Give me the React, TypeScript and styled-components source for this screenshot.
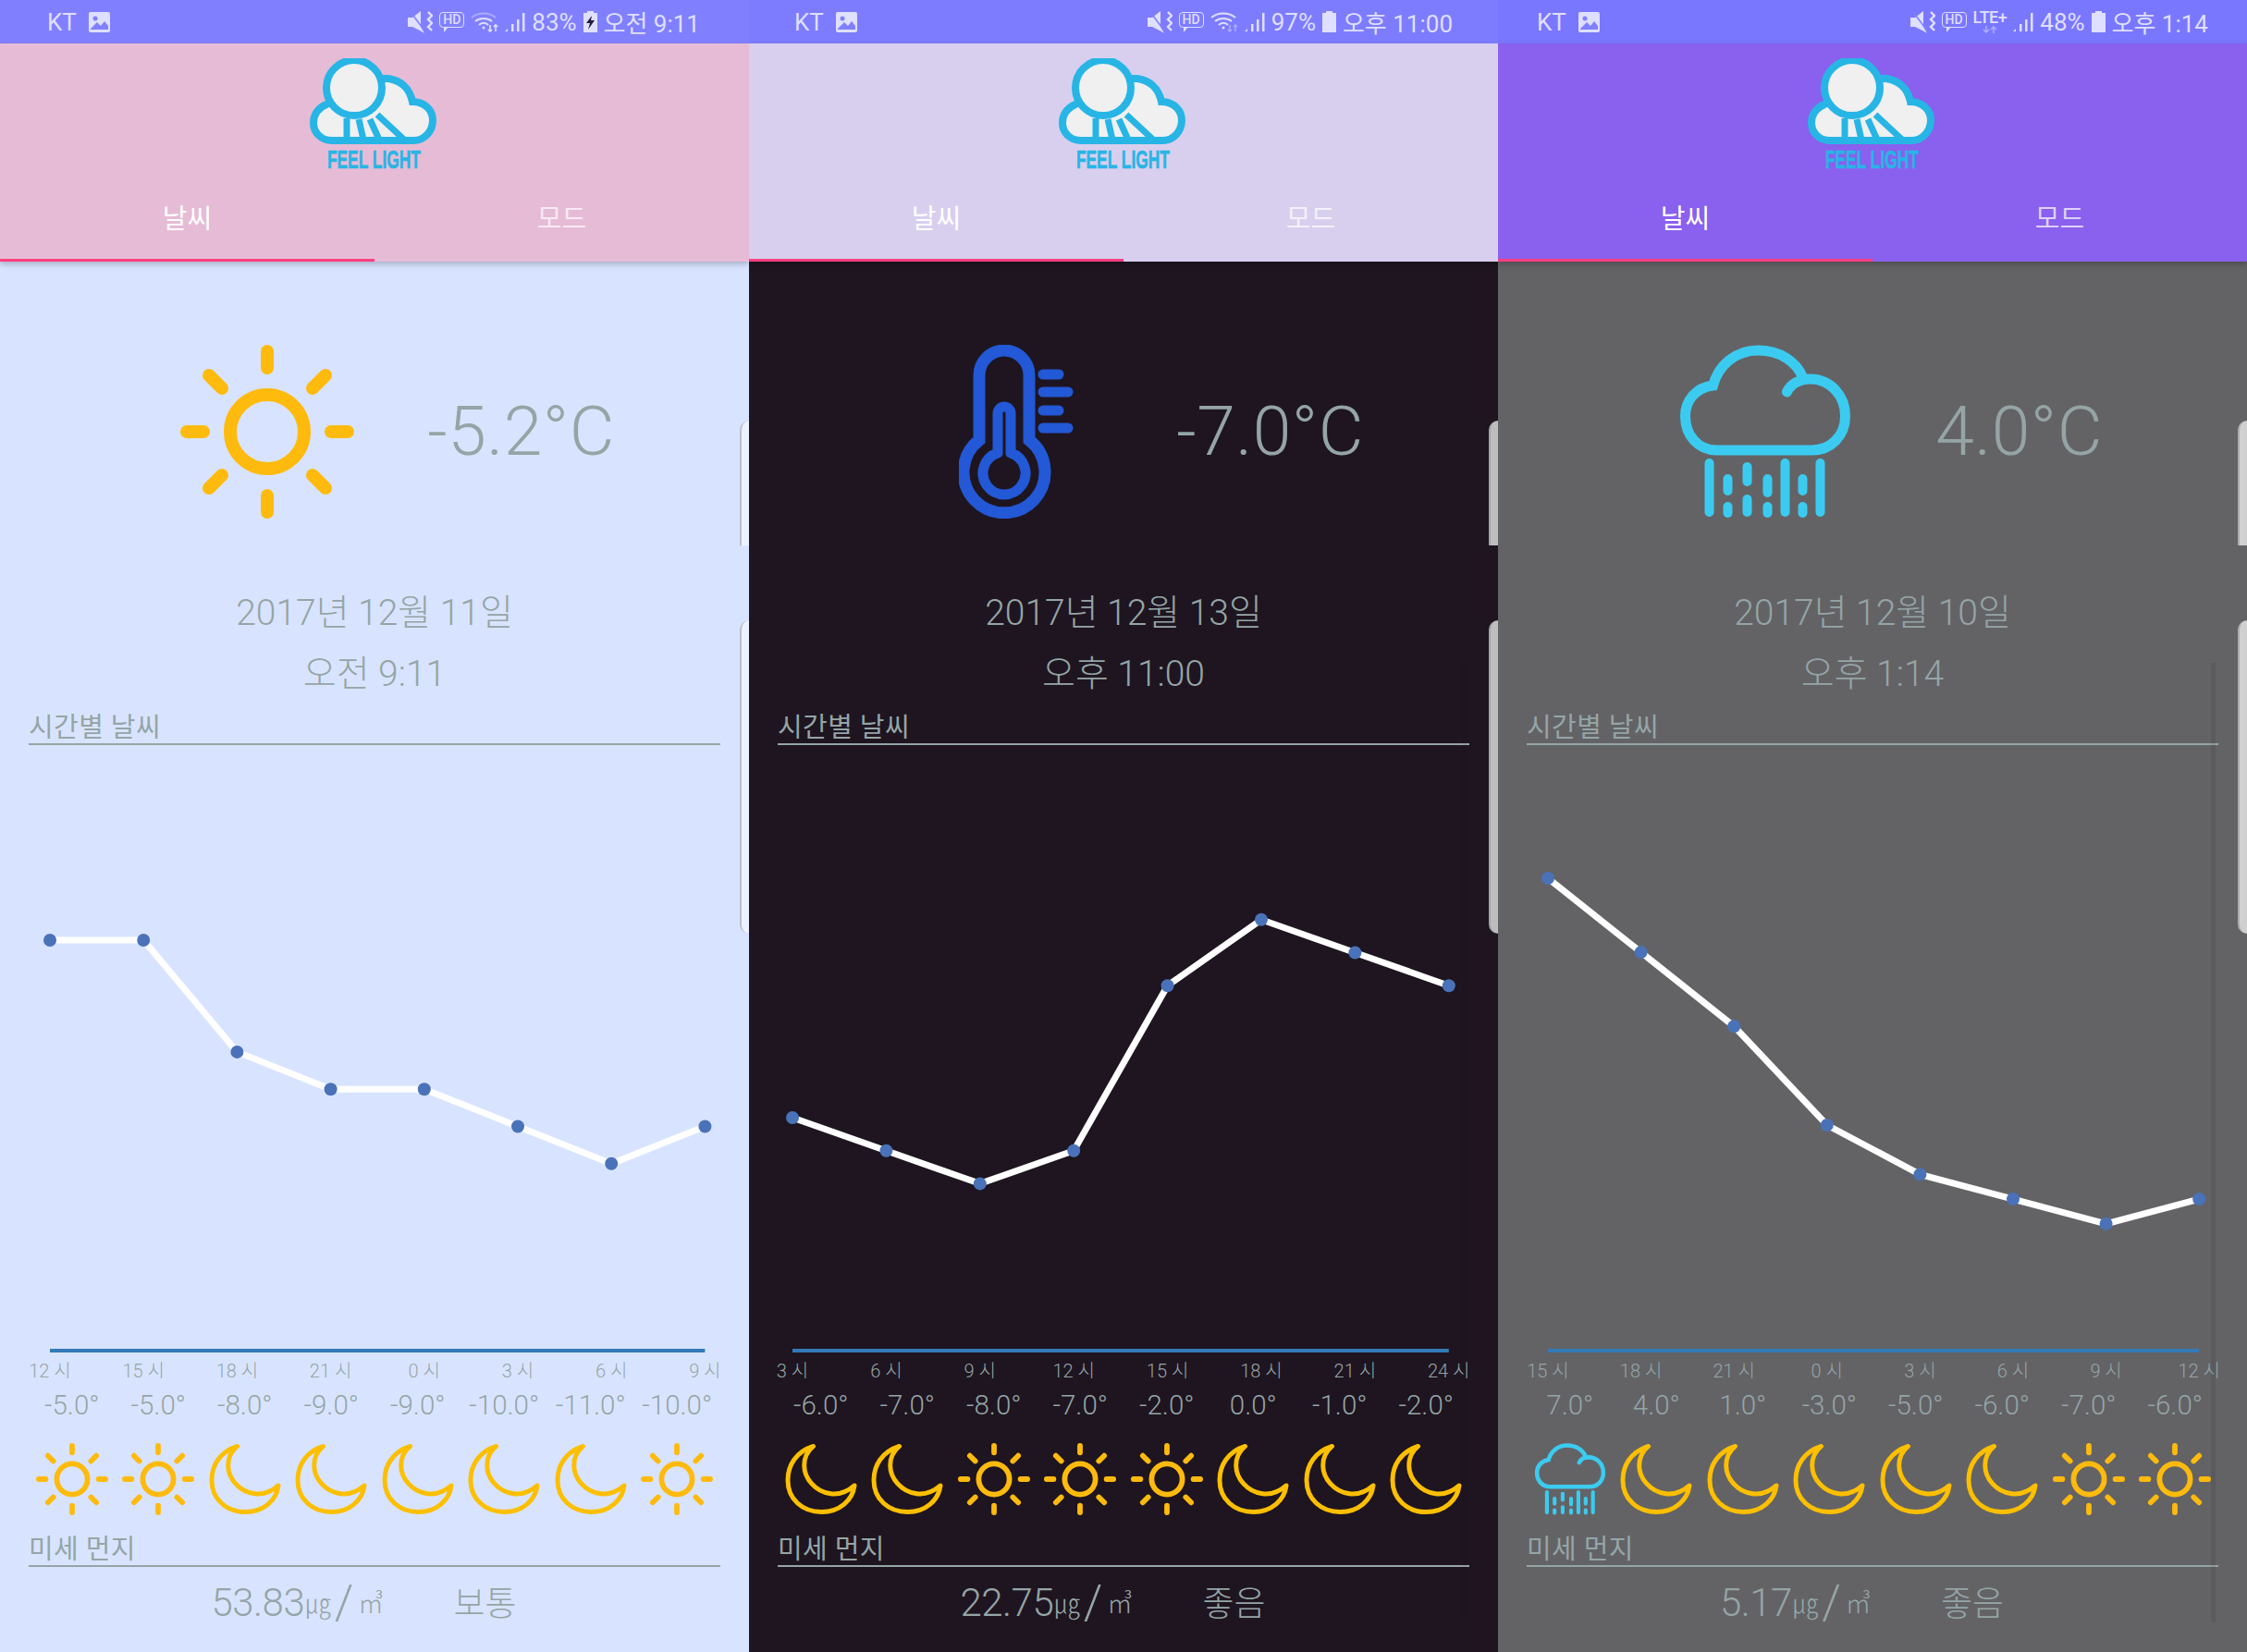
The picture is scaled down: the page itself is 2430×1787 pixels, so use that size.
import React from 'react';
import styled, { createGlobalStyle } from 'styled-components';

type Weather = 'sun' | 'moon' | 'rain';

type ScreenData = {
  statusBg: string;
  headerBg: string;
  bodyBg: string;
  handle: string;
  track: number;
  kt: number;
  clockRight: number;
  network: 'wifi' | 'wifi-dim' | 'lte';
  battery: string;
  clock: string;
  bolt?: boolean;
  hero: 'sun' | 'thermo' | 'rain';
  temp: string;
  date: string;
  time: string;
  startX: number;
  stepX: number;
  baseY: number;
  baseTemp: number;
  scaleY: number;
  hours: string[];
  temps: number[];
  icons: Weather[];
  dust: string;
  grade: string;
};

const screens: ScreenData[] = [
  {
    statusBg: '#8080ff', headerBg: '#e6bbd6', bodyBg: '#d8e4ff', handle: 'rgba(255,255,255,0.5)', track: 0,
    kt: 51, clockRight: 53, network: 'wifi', battery: '83%', clock: '오전 9:11', bolt: true,
    hero: 'sun', temp: '-5.2°C', date: '2017년 12월 11일', time: '오전 9:11',
    startX: 54, stepX: 101.2, baseY: 1017, baseTemp: -5, scaleY: 40.3,
    hours: ['12 시', '15 시', '18 시', '21 시', '0 시', '3 시', '6 시', '9 시'],
    temps: [-5, -5, -8, -9, -9, -10, -11, -10],
    icons: ['sun', 'sun', 'moon', 'moon', 'moon', 'moon', 'moon', 'sun'],
    dust: '53.83', grade: '보통',
  },
  {
    statusBg: '#7d7cff', headerBg: '#d8cfee', bodyBg: '#1e1520', handle: '#bdbdbd', track: 0.03,
    kt: 49, clockRight: 49, network: 'wifi-dim', battery: '97%', clock: '오후 11:00',
    hero: 'thermo', temp: '-7.0°C', date: '2017년 12월 13일', time: '오후 11:00',
    startX: 47, stepX: 101.4, baseY: 1209, baseTemp: -6, scaleY: 35.7,
    hours: ['3 시', '6 시', '9 시', '12 시', '15 시', '18 시', '21 시', '24 시'],
    temps: [-6, -7, -8, -7, -2, 0, -1, -2],
    icons: ['moon', 'moon', 'sun', 'sun', 'sun', 'moon', 'moon', 'moon'],
    dust: '22.75', grade: '좋음',
  },
  {
    statusBg: '#7a77ff', headerBg: '#8a60ee', bodyBg: '#636366', handle: '#d0d0d0', track: 0.08,
    kt: 42, clockRight: 42, network: 'lte', battery: '48%', clock: '오후 1:14',
    hero: 'rain', temp: '4.0°C', date: '2017년 12월 10일', time: '오후 1:14',
    startX: 54, stepX: 100.6, baseY: 950, baseTemp: 7, scaleY: 26.7,
    hours: ['15 시', '18 시', '21 시', '0 시', '3 시', '6 시', '9 시', '12 시'],
    temps: [7, 4, 1, -3, -5, -6, -7, -6],
    icons: ['rain', 'moon', 'moon', 'moon', 'moon', 'moon', 'sun', 'sun'],
    dust: '5.17', grade: '좋음',
  },
];

const GlobalStyle = createGlobalStyle`
  html, body {
    margin: 0;
    padding: 0;
    overflow: hidden;
    font-family: Roboto, "Noto Sans CJK KR", sans-serif;
  }
`;

const Page = styled.div`
  display: grid;
  grid-template-columns: repeat(3, 810px);
  width: 2430px;
  height: 1787px;
  overflow: hidden;
`;

const Screen = styled.section<{ $bg: string }>`
  position: relative;
  display: flex;
  flex-direction: column;
  background: ${p => p.$bg};
  color: #95a5a6;
  font-weight: 300;
  overflow: hidden;
`;

const StatusBar = styled.div<{ $bg: string; $left: number; $right: number }>`
  display: flex;
  align-items: center;
  height: 47px;
  padding: 0 ${p => p.$right}px 0 ${p => p.$left}px;
  background: ${p => p.$bg};
  color: #dfdfff;
  font-size: 26px;
  font-weight: 400;
`;

const StatusLeft = styled.div`
  display: flex;
  align-items: center;
  gap: 13px;
  flex: 1;
`;

const StatusRight = styled.div`
  display: flex;
  align-items: center;
  gap: 7px;
`;

const HdBadge = styled.span`
  position: relative;
  display: block;
  margin-top: -4px;
  padding: 0 3px;
  border: 1.5px solid #dfdfff;
  border-radius: 4px;
  font-size: 14px;
  line-height: 15px;
  font-weight: 500;
  &::after {
    content: '';
    position: absolute;
    left: 4px;
    bottom: -6px;
    width: 0;
    height: 0;
    border-top: 6px solid #dfdfff;
    border-right: 5px solid transparent;
  }
`;

const LteStack = styled.span`
  display: flex;
  flex-direction: column;
  align-items: center;
  gap: 2px;
`;

const LteBadge = styled.span`
  font-size: 18px;
  line-height: 15px;
  font-weight: 500;
  letter-spacing: -0.5px;
`;

const Header = styled.header<{ $bg: string }>`
  position: relative;
  z-index: 1;
  display: flex;
  flex-direction: column;
  align-items: center;
  height: 236px;
  padding-top: 16px;
  box-sizing: border-box;
  background: ${p => p.$bg};
  box-shadow: 0 3px 6px rgba(0, 0, 0, 0.22);
`;

const LogoMark = styled.div`
  height: 94px;
  margin-left: -3px;
`;

const LogoText = styled.div`
  height: 32px;
  margin-left: -2px;
  color: #27b5e5;
  font-family: "Liberation Sans", sans-serif;
  font-size: 28px;
  line-height: 32px;
  font-weight: 700;
  white-space: nowrap;
  -webkit-text-stroke: 0.6px #27b5e5;
  transform: scaleX(0.62);
`;

const Tabs = styled.nav`
  display: grid;
  grid-template-columns: 1fr 1fr;
  align-self: stretch;
  height: 94px;
`;

const Tab = styled.div<{ $active?: boolean }>`
  display: flex;
  align-items: center;
  justify-content: center;
  padding-bottom: 2px;
  color: ${p => (p.$active ? '#fff' : 'rgba(255,255,255,0.72)')};
  border-bottom: 3px solid ${p => (p.$active ? '#ff3f80' : 'transparent')};
  font-size: 29px;
  font-weight: 400;
`;

const Body = styled.main`
  display: flex;
  flex-direction: column;
  flex: 1;
  padding: 90px 31px 0 31px;
`;

const Hero = styled.div`
  display: grid;
  grid-template-columns: 275px 275px;
  height: 188px;
  margin-left: 120px;
`;

const HeroIcon = styled.div`
  display: flex;
  justify-content: center;
`;

const HeroTemp = styled.div`
  align-self: center;
  margin-top: -3px;
  text-align: center;
  font-size: 75px;
  font-weight: 300;
  line-height: 80px;
  letter-spacing: 0.5px;
`;

const DateLine = styled.div<{ $first?: boolean }>`
  height: 66px;
  margin-top: ${p => (p.$first ? '69px' : '0')};
  text-align: center;
  font-size: 39px;
  line-height: 66px;
`;

const SectionTitle = styled.div`
  height: 35px;
  padding-top: 7px;
  border-bottom: 2px solid currentColor;
  font-size: 29px;
  line-height: 36px;
  font-weight: 400;
  letter-spacing: 0.4px;
`;

const Chart = styled.svg`
  display: block;
  width: 749px;
  height: 664px;
`;

// labels sit centred under the chart points, so the first column may start left of the body
const HourRow = styled.div<{ $start: number; $step: number }>`
  display: grid;
  grid-template-columns: repeat(8, ${p => p.$step}px);
  height: 27px;
  margin-left: ${p => p.$start - 31 - p.$step / 2}px;
  font-size: 20px;
  line-height: 27px;
  text-align: center;
`;

const TempRow = styled.div`
  display: grid;
  grid-template-columns: repeat(8, 1fr);
  height: 46px;
  font-size: 29.5px;
  line-height: 46px;
  text-align: center;
`;

const IconRow = styled.div`
  display: grid;
  grid-template-columns: repeat(8, 1fr);
  justify-items: center;
  height: 78px;
  margin-top: 18px;
  margin-bottom: 12px;
`;

const DustRow = styled.div`
  display: flex;
  align-items: center;
  justify-content: center;
  gap: 76px;
  height: 76px;
  padding-right: 23px;
`;

const DustValue = styled.div`
  display: flex;
  align-items: center;
  font-size: 42px;
  letter-spacing: -0.5px;
`;

const DustUnit = styled.span`
  margin-left: 1px;
  font-size: 28px;
`;

const DustSlash = styled.span`
  margin: 0 4px;
  font-size: 52px;
  font-weight: 300;
`;

const DustGrade = styled.div`
  margin-top: -2px;
  font-size: 37px;
`;

const EdgeHandle = styled.div<{ $top: number; $height: number; $color: string; $tail?: boolean }>`
  position: absolute;
  z-index: 2;
  right: 0;
  top: ${p => p.$top}px;
  width: 8px;
  height: ${p => p.$height}px;
  background: ${p => p.$color};
  border-left: 2px solid rgba(130, 130, 140, 0.45);
  border-radius: ${p => (p.$tail ? '10px 0 0 10px' : '10px 0 0 0')};
`;

const ScrollTrack = styled.div<{ $alpha: number }>`
  position: absolute;
  right: 34px;
  top: 717px;
  width: 5px;
  height: 1038px;
  background: rgba(0, 0, 0, ${p => p.$alpha});
`;

const SunIcon = ({ size }: { size: number }) => (
  <svg width={size} height={size} viewBox="0 0 188 188" fill="none" stroke="#ffba0e" strokeWidth="14" strokeLinecap="round">
    <circle cx="94" cy="94" r="40" />
    <path d="M94 7V25M94 163V181M7 94H25M163 94H181M157 33L143 47M31 33L45 47M157 155L143 141M31 155L45 141" />
  </svg>
);

const MoonIcon = ({ size }: { size: number }) => (
  <svg width={size} height={size} viewBox="0 0 79 78" fill="none" stroke="#fdbf00" strokeWidth="5" strokeLinejoin="round">
    <path d="M31 3C12 9 3 24 3 40C3 61 19 75 40 75C60 75 74 62 76 46C68 53 58 56 50 55C33 53 21 38 21 24C21 15 25 8 31 3Z" />
  </svg>
);

const RainIcon = ({ size }: { size: number }) => (
  <svg width={size} height={size} viewBox="0 0 185 188" fill="none" stroke="#3ccbf0" strokeLinecap="round">
    <path strokeWidth="11" d="M116 51C120 42 130 37 141 37C163 37 179 55 179 77C179 99 163 114 143 114H40C20 114 6 98 6 77C6 60 18 46 36 44C42 22 60 6 85 6C108 6 126 18 133 35" />
    <path strokeWidth="10" d="M32 128V181M114 128V181M152 128V181M52 145V158M52 175V182M73 132V148M73 167V181M95 145V160M95 175V182M133 145V158M133 175V182" />
  </svg>
);

const ThermoIcon = () => (
  <svg width="124" height="188" viewBox="0 0 124 188" fill="none" stroke="#2358d6">
    <path strokeWidth="13" d="M22 103V33A27 27 0 0 1 76 33V103A44 44 0 1 1 22 103Z" />
    <path strokeWidth="11" strokeLinejoin="round" d="M42 117V74A7 7 0 0 1 56 74V117A23 23 0 1 1 42 117Z" />
    <path strokeWidth="11" strokeLinecap="round" d="M91 32H108M91 51H118M91 71H108M91 90H118" />
  </svg>
);

const LogoIcon = () => (
  <svg width="137" height="94" viewBox="0 0 137 94" fill="#f0f0f0" stroke="#27b5e5">
    <path strokeWidth="8" d="M24 89H112C125 89 133 78 133 67C133 56 124 47 111 47C108 32 98 24 85 22H60L18 50C8 54 4 62 4 70C4 80 12 89 24 89Z" />
    <circle cx="48" cy="32" r="30" strokeWidth="8" />
    <path strokeWidth="7" fill="none" d="M40 65V88M53 66L58 88M65 66L75 88M73 61L102 88" />
  </svg>
);

const ImageIcon = () => (
  <svg width="23" height="22" viewBox="0 0 23 22">
    <rect width="23" height="22" rx="2" fill="#dfdfff" />
    <circle cx="7" cy="7" r="2.5" fill="#8080ff" />
    <path d="M2 18L9 11L13 15L17 10L21 15V19H2Z" fill="#8080ff" />
  </svg>
);

const MuteIcon = () => (
  <svg width="27" height="24" viewBox="0 0 27 24" fill="none" stroke="#dfdfff">
    <path fill="#dfdfff" stroke="none" d="M0 7H5L14 0V17L18 24L13 21L5 17H0Z" />
    <path strokeWidth="1.5" d="M3 1L18 21" stroke="#8080ff" />
    <path strokeWidth="2.4" d="M22 1L26 5L22 9L26 13L22 17L26 21" />
  </svg>
);

const WifiIcon = ({ dim }: { dim?: boolean }) => (
  <svg width="30" height="22" viewBox="0 0 30 22" fill="none" stroke="#dfdfff" strokeWidth="2">
    <path opacity={dim ? 1 : 0.45} d="M1 6C8 0 20 0 27 6" />
    <path d="M5 10C10 6 18 6 23 10M9 14C12 11 16 11 19 14" />
    <circle cx="14" cy="17" r="1.5" fill="#dfdfff" stroke="none" />
    <path opacity={dim ? 0.45 : 1} d="M21 14V21M19 19L21 21L23 19M27 21V14M25 16L27 14L29 16" strokeWidth="1.6" />
  </svg>
);

const TransferArrows = () => (
  <svg width="16" height="8" viewBox="0 0 16 8" fill="none" stroke="#dfdfff" strokeWidth="1.6" opacity="0.5">
    <path d="M4 0V7M1 4L4 7L7 4M12 8V1M9 4L12 1L15 4" />
  </svg>
);

const SignalIcon = () => (
  <svg width="22" height="22" viewBox="0 0 22 22" fill="#dfdfff">
    <path d="M0 21L3 18V21ZM7 13H9.5V21H7ZM13 8H15.5V21H13ZM19 1H21.5V21H19Z" />
  </svg>
);

const BatteryIcon = ({ bolt }: { bolt?: boolean }) => (
  <svg width="15" height="23" viewBox="0 0 15 23">
    <path fill="#dfdfff" d="M4 0H11V2H15V23H0V2H4Z" />
    {bolt && <path fill="#1f1f3a" d="M9 5L3 13H7L5 20L12 10H8Z" />}
  </svg>
);

const WeatherIcon = ({ kind, size }: { kind: Weather; size: number }) => {
  if (kind === 'sun') return <SunIcon size={size} />;
  if (kind === 'rain') return <RainIcon size={size} />;
  return <MoonIcon size={size} />;
};

const WeatherChart = ({ data }: { data: ScreenData }) => {
  const points = data.temps.map((t, i) => ({
    x: data.startX + i * data.stepX,
    y: data.baseY + (data.baseTemp - t) * data.scaleY,
  }));
  const line = points.map(p => `${p.x},${p.y}`).join(' ');
  return (
    <Chart viewBox="31 806 749 664">
      <polyline points={line} fill="none" stroke="#fff" strokeWidth="7" />
      {points.map((p, i) => <circle key={i} cx={p.x} cy={p.y} r="7" fill="#4a72b8" />)}
      <rect x={points[0].x} y="1459" width={points[7].x - points[0].x} height="4" fill="#337ab7" />
    </Chart>
  );
};

const PhoneScreen = ({ data }: { data: ScreenData }) => (
  <Screen $bg={data.bodyBg}>
    <StatusBar $bg={data.statusBg} $left={data.kt} $right={data.clockRight}>
      <StatusLeft>
        <span>KT</span>
        <ImageIcon />
      </StatusLeft>
      <StatusRight>
        <MuteIcon />
        <HdBadge>HD</HdBadge>
        {data.network === 'lte' ? (
          <LteStack>
            <LteBadge>LTE+</LteBadge>
            <TransferArrows />
          </LteStack>
        ) : (
          <WifiIcon dim={data.network === 'wifi-dim'} />
        )}
        <SignalIcon />
        <span>{data.battery}</span>
        <BatteryIcon bolt={data.bolt} />
        <span>{data.clock}</span>
      </StatusRight>
    </StatusBar>
    <Header $bg={data.headerBg}>
      <LogoMark>
        <LogoIcon />
      </LogoMark>
      <LogoText>FEEL LIGHT</LogoText>
      <Tabs>
        <Tab $active>날씨</Tab>
        <Tab>모드</Tab>
      </Tabs>
    </Header>
    <Body>
      <Hero>
        <HeroIcon>
          {data.hero === 'sun' && <SunIcon size={188} />}
          {data.hero === 'thermo' && <ThermoIcon />}
          {data.hero === 'rain' && <RainIcon size={188} />}
        </HeroIcon>
        <HeroTemp>{data.temp}</HeroTemp>
      </Hero>
      <DateLine $first>{data.date}</DateLine>
      <DateLine>{data.time}</DateLine>
      <SectionTitle>시간별 날씨</SectionTitle>
      <WeatherChart data={data} />
      <HourRow $start={data.startX} $step={data.stepX}>
        {data.hours.map(h => <span key={h}>{h}</span>)}
      </HourRow>
      <TempRow>
        {data.temps.map((t, i) => <span key={i}>{t.toFixed(1)}°</span>)}
      </TempRow>
      <IconRow>
        {data.icons.map((kind, i) => <WeatherIcon key={i} kind={kind} size={78} />)}
      </IconRow>
      <SectionTitle>미세 먼지</SectionTitle>
      <DustRow>
        <DustValue>
          {data.dust}
          <DustUnit>㎍</DustUnit>
          <DustSlash>/</DustSlash>
          <DustUnit>㎥</DustUnit>
        </DustValue>
        <DustGrade>{data.grade}</DustGrade>
      </DustRow>
    </Body>
    <EdgeHandle $top={455} $height={135} $color={data.handle} />
    <EdgeHandle $top={671} $height={339} $color={data.handle} $tail />
    <ScrollTrack $alpha={data.track} />
  </Screen>
);

export default function App() {
  return (
    <>
      <GlobalStyle />
      <Page>
        {screens.map(s => <PhoneScreen key={s.date} data={s} />)}
      </Page>
    </>
  );
}
